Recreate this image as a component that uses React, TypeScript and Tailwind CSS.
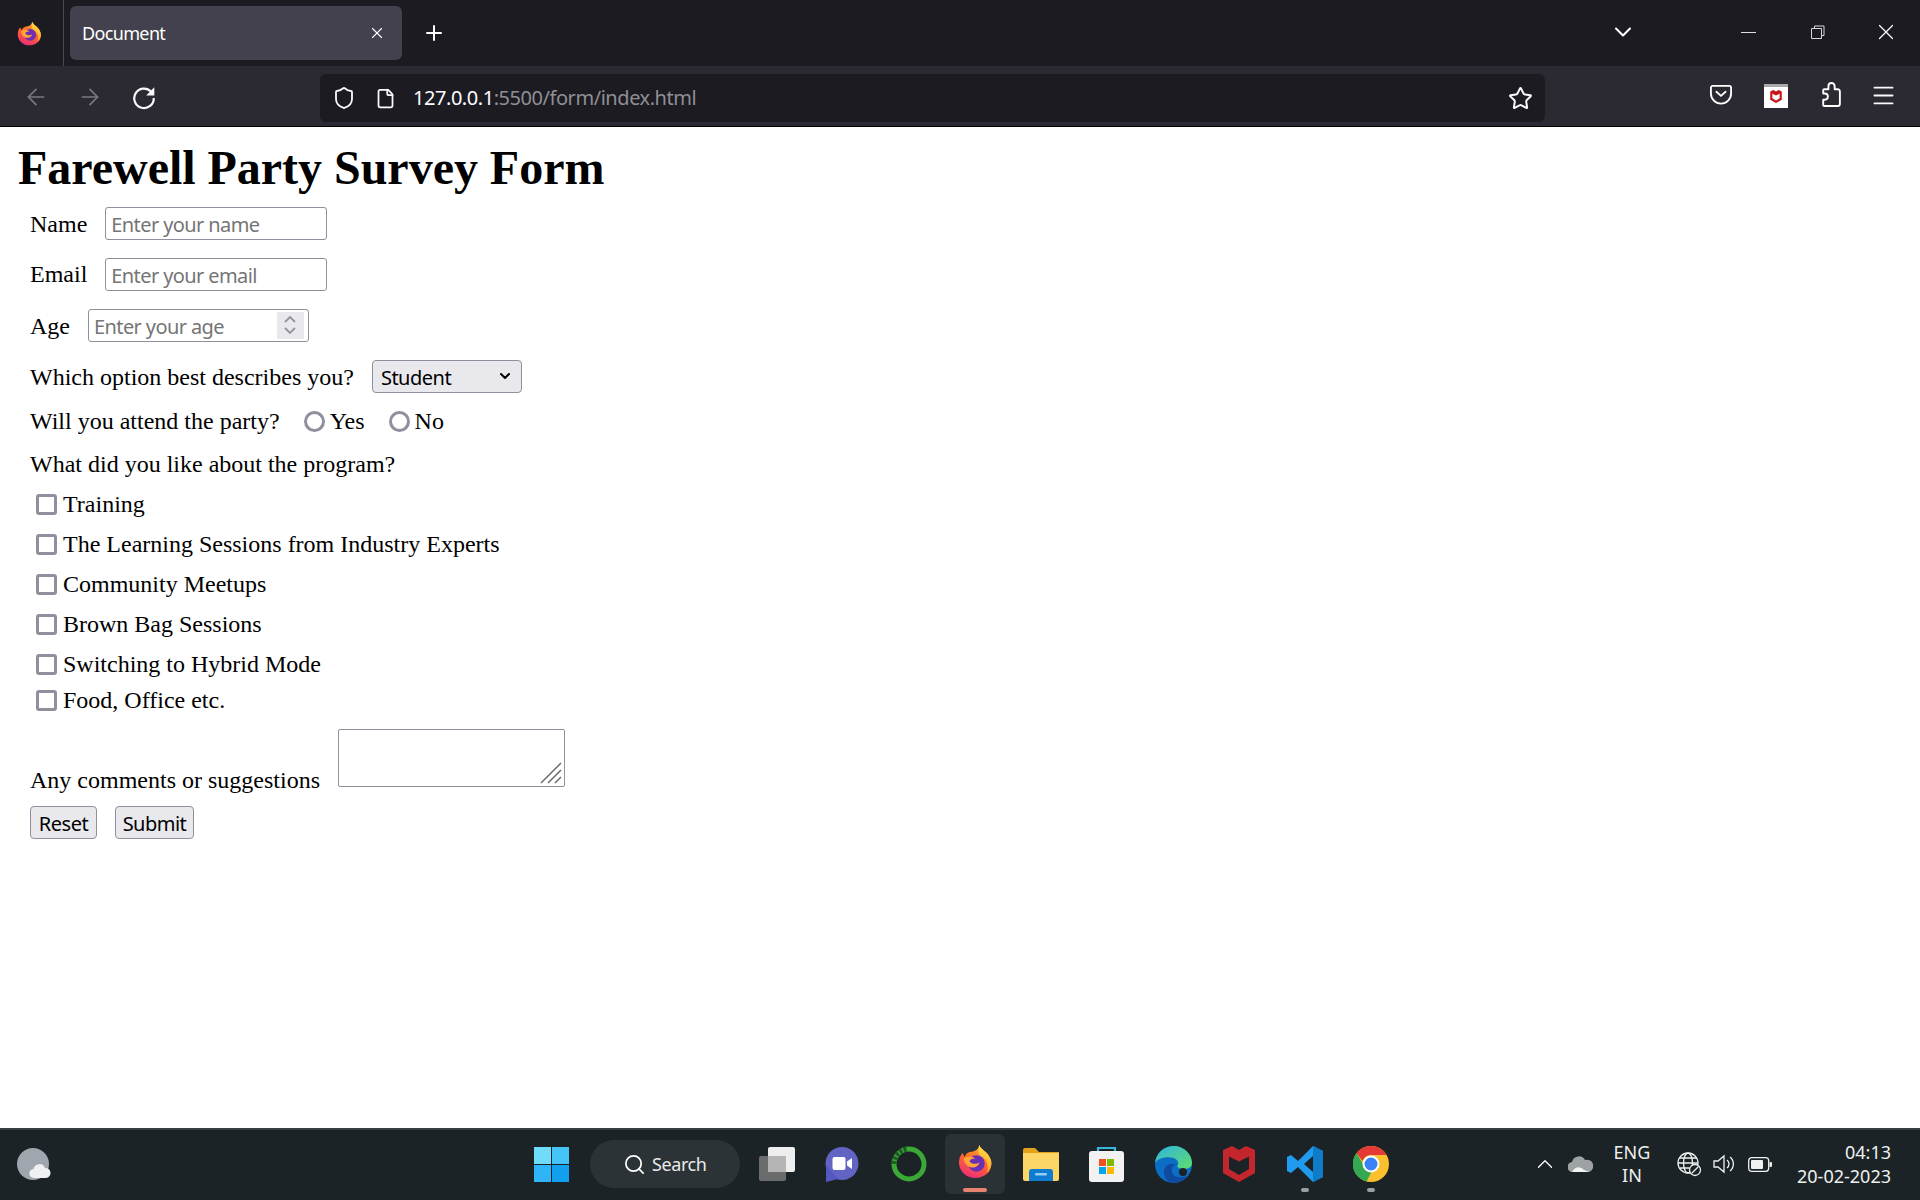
import React from 'react';
import { Search, ChevronUp, ChevronDown, X, Plus, ArrowLeft, ArrowRight, Shield, File, Star, Menu } from 'lucide-react';

const serif = "font-['Liberation_Serif',serif]";
const ui = "font-['Noto_Sans',sans-serif]";

const FirefoxLogo: React.FC<{ size: number; id: string }> = ({ size, id }) => (
  <svg width={size} height={size} viewBox="0 0 36 36">
    <defs>
      <linearGradient id={`${id}a`} x1="0.7" y1="0" x2="0.3" y2="1">
        <stop offset="0" stopColor="#ffb52e" />
        <stop offset="0.45" stopColor="#ff6a2a" />
        <stop offset="1" stopColor="#ee2a7b" />
      </linearGradient>
      <linearGradient id={`${id}b`} x1="0.6" y1="0" x2="0.4" y2="1">
        <stop offset="0" stopColor="#ffe14d" />
        <stop offset="1" stopColor="#ff9a1f" />
      </linearGradient>
    </defs>
    <path d="M22 1c1 4 6 6 9 10 3 4 4 8 3 12-1 7-8 12-16 12C9 35 2 29 1 20 1 15 2 12 5 9c0 2 1 3 2 4 1-3 4-5 7-5 4-1 8-3 8-7z" fill={`url(#${id}a)`} />
    <path d="M22 1c1 4 6 6 9 10 3 4 4 8 3 12-1 3-2 5-4 7 1-5 1-11-3-15-2-2-6-3-6-7 0-3 0-5 1-7z" fill={`url(#${id}b)`} />
    <circle cx="19" cy="20" r="8.5" fill="#6b2fb5" />
    <path d="M6 15c3-3 8-3 12 0-4 0-6 1-6 3 2 3 7 3 10 1-1 4-5 6-9 5-4-1-7-5-7-9z" fill="#ffa436" />
  </svg>
);

const McAfeeShield: React.FC<{ className?: string; color: string; inner: string }> = ({ className, color, inner }) => (
  <svg className={className} viewBox="0 0 32 36">
    <path d="M0 4l9 -4 7 4 7-4 9 4v23l-16 9-16-9z" fill={color} />
    <path d="M6 9l10 5 10-5v14l-10 6-10-6z" fill={inner} />
    <path d="M6 7.5l3-1.500 7 4 7-4 3 1.500v3l-10 5-10-5z" fill={color} />
  </svg>
);

const Titlebar = () => (
  <div className="flex h-[66px] shrink-0 items-start bg-[#1c1b22] text-white">
    <div className="flex h-full w-[64px] items-center justify-center border-r border-[#4b4a53] pr-[4px]">
      <FirefoxLogo size={25} id="fftop" />
    </div>
    <div className={`ml-[6px] mt-[6px] flex h-[54px] w-[332px] items-center justify-between rounded-[6px] bg-[#42414d] pl-[12px] pr-[16px] text-[18px] tracking-[-0.65px] ${ui}`}>
      <span>Document</span>
      <X size={18} strokeWidth={1.5} />
    </div>
    <div className="ml-[20px] mt-[21px]">
      <Plus size={24} strokeWidth={2} />
    </div>
    <div className="ml-auto mt-[18px] flex items-center">
      <ChevronDown size={28} strokeWidth={1.8} />
      <div className="ml-[104px] h-[1px] w-[15px] bg-[#e0e0e0]" />
      <svg width="14" height="14" viewBox="0 0 14 14" className="ml-[55px] fill-none stroke-[#d8d8d8]">
        <path d="M3.500 3.500V1h9.500v9.500h-2.500M.5 3.500h10v10H.5z" />
      </svg>
      <X size={26} strokeWidth={1.1} className="ml-[48px] mr-[21px]" />
    </div>
  </div>
);

const Toolbar = () => (
  <div className="flex h-[61px] shrink-0 items-start border-b border-black bg-[#2b2a33] text-[#fbfbfe]">
    <ArrowLeft size={26} strokeWidth={1.6} className="ml-[23px] mt-[18px] text-[#7a7981]" />
    <ArrowRight size={26} strokeWidth={1.6} className="ml-[28px] mt-[18px] text-[#7a7981]" />
    <svg width="26" height="26" viewBox="0 0 24 24" className="ml-[28px] mt-[18px]">
      <path d="M18.500 7A9 9 0 1 0 21 13" fill="none" stroke="currentColor" strokeWidth="2" />
      <path d="M21.500 3v7.500H14z" fill="currentColor" />
    </svg>
    <div className="ml-[163px] mt-[8px] flex h-[48px] w-[1225px] items-center rounded-[6px] bg-[#1c1b22] pl-[12px] pr-[12px]">
      <Shield size={24} strokeWidth={1.8} />
      <File size={21} strokeWidth={2} className="ml-[19px]" />
      <span className={`ml-[17px] text-[20px] tracking-[-0.45px] ${ui}`}>
        127.0.0.1<span className="text-[#8f8f94]">:5500/form/index.html</span>
      </span>
      <Star size={25} strokeWidth={1.9} className="ml-auto" />
    </div>
    <div className="ml-[163px] mt-[18px] flex w-[26px] items-center justify-center">
      <svg width="22" height="21" viewBox="0 0 24 22" className="fill-none stroke-white stroke-2">
        <path d="M3 1.500h18a2 2 0 0 1 2 2V10a11 11 0 0 1-22 0V3.500a2 2 0 0 1 2-2z" />
        <path d="M7 8l5 4.500L17 8" strokeLinecap="round" />
      </svg>
    </div>
    <div className="ml-[30px] mt-[18px] flex h-[24px] w-[24px] items-start justify-center border-t-[3px] border-[#a8a8a8] bg-white pt-[3px]">
      <McAfeeShield className="h-[13px] w-[12px]" color="#c8161d" inner="#fff" />
    </div>
    <svg width="21" height="25" viewBox="0 0 20 24" className="ml-[32px] mt-[16px] fill-none stroke-white stroke-[1.8]">
      <path d="M8 7H4a1 1 0 0 0-1 1v3h1.500a3 3 0 0 1 0 6H3v5a1 1 0 0 0 1 1h13a2 2 0 0 0 2-2V9a2 2 0 0 0-2-2h-3V4a3 3 0 0 0-6 0z" strokeLinejoin="round" />
    </svg>
    <Menu size={27} strokeWidth={1.7} className="ml-[29px] mt-[16px]" />
  </div>
);

const fieldBox = `h-[33px] rounded-[3px] border border-[#8f8f9d] bg-white pt-[2px] text-[20px] tracking-[-0.6px] outline-none placeholder:text-[#757575] ${ui}`;
const plainBtn = `h-[33px] rounded-[4px] border border-[#8f8f9d] bg-[#e9e9ed] text-[20px] tracking-[-0.5px] text-black ${ui}`;
const tick = 'appearance-none border-[3px] border-[#8f8f9d] bg-white';
const box = `${tick} h-[21px] w-[21px] rounded-[3px]`;
const radio = `${tick} h-[21px] w-[21px] rounded-full`;

const extras = ['Training', 'The Learning Sessions from Industry Experts', 'Community Meetups', 'Brown Bag Sessions', 'Switching to Hybrid Mode'];

const SurveyForm = () => (
  <div className={`flex-1 bg-white pl-[30px] pt-[14px] text-[24px] leading-[33px] text-black ${serif}`}>
    <h1 className="-ml-[12px] text-[48px] font-bold leading-[53px] tracking-[-0.02px]">Farewell Party Survey Form</h1>

    <div className="mt-[13px] flex h-[33px] items-center">
      <label className="pt-[2px]">Name</label>
      <input placeholder="Enter your name" className={`${fieldBox} ml-[18px] w-[222px] px-[5px]`} />
    </div>
    <div className="mt-[18px] flex h-[33px] items-center">
      <label>Email</label>
      <input placeholder="Enter your email" className={`${fieldBox} ml-[18px] w-[222px] px-[5px]`} />
    </div>
    <div className="mt-[18px] flex h-[33px] items-center">
      <label className="pt-[2px]">Age</label>
      <div className="relative ml-[18px] w-[221px]">
        <input placeholder="Enter your age" className={`${fieldBox} w-full px-[5px]`} />
        <div className="pointer-events-none absolute right-[5px] top-[3px] flex h-[27px] w-[27px] items-center justify-center bg-[#e9e9ed]">
          <svg width="16" height="22" viewBox="0 0 16 22" className="fill-none stroke-[#93939c] stroke-[1.8]">
            <path d="M3 8l5-5 5 5M3 14l5 5 5-5" />
          </svg>
        </div>
      </div>
    </div>
    <div className="mt-[18px] flex h-[33px] items-center">
      <label className="pt-[2px]">Which option best describes you?</label>
      <div className="relative ml-[18px] w-[150px]">
        <select className={`${plainBtn} w-full appearance-none pl-[8px]`}>
          <option>Student</option>
        </select>
        <ChevronDown size={16} strokeWidth={3} className="pointer-events-none absolute right-[9px] top-[8px]" />
      </div>
    </div>
    <div className="mt-[12px] flex h-[33px] items-center">
      <label>Will you attend the party?</label>
      <input type="radio" name="attend" className={`${radio} ml-[24px]`} />
      <span className="ml-[5px]">Yes</span>
      <input type="radio" name="attend" className={`${radio} ml-[24px]`} />
      <span className="ml-[5px]">No</span>
    </div>
    <div className="mt-[10px]">What did you like about the program?</div>

    <div className="mt-[7px] flex flex-col gap-[8px] pl-[6px]">
      {extras.map((item) => (
        <label key={item} className="flex h-[32px] items-center gap-[6px]">
          <input type="checkbox" className={box} />
          {item}
        </label>
      ))}
    </div>
    <label className="mt-[4px] flex h-[32px] items-center gap-[6px] pl-[6px]">
      <input type="checkbox" className={box} />
      Food, Office etc.
    </label>

    <div className="mt-[13px] flex h-[58px] items-end">
      <span className="leading-[24px] -mb-[5px]">Any comments or suggestions</span>
      <div className="relative ml-[18px]">
        <textarea className="block h-[58px] w-[227px] resize-none rounded-[2px] border border-[#8f8f9d] bg-white outline-none" />
        <svg width="22" height="22" viewBox="0 0 22 22" className="pointer-events-none absolute bottom-[3px] right-[3px] fill-none stroke-[#6b6b6b]">
          <path d="M1 21L21 1M8 21L21 8M15 21l6-6" strokeWidth="1.500" />
        </svg>
      </div>
    </div>
    <div className="mt-[19px] flex gap-[18px]">
      <button className={`${plainBtn} w-[67px]`}>Reset</button>
      <button className={`${plainBtn} w-[79px]`}>Submit</button>
    </div>
  </div>
);

const Taskbar = () => (
  <div className={`flex h-[72px] shrink-0 items-center border-t-2 border-[#3a3d3f] bg-[#1b2327] pb-[2px] text-white ${ui}`}>
    {/* weather */}
    <div className="relative ml-[17px] h-[32px] w-[32px] rounded-full bg-[#a0a6ad]">
      <svg width="22" height="14" viewBox="0 0 22 14" className="absolute -right-[2px] bottom-[2px] fill-[#eef0f2]">
        <path d="M5 14a4.500 4.500 0 0 1-.5-9A6 6 0 0 1 16 4a5 5 0 0 1 1 10z" />
      </svg>
    </div>

    {/* windows logo */}
    <div className="ml-[485px] grid h-[35px] w-[35px] grid-cols-2 gap-[1px]">
      <div className="bg-[#6fdcfb]" />
      <div className="bg-[#45c5f7]" />
      <div className="bg-[#2db5f5]" />
      <div className="bg-[#10a0ee]" />
    </div>

    <div className="ml-[21px] flex h-[48px] w-[150px] items-center rounded-full bg-[#2c3336] pl-[33px] text-[18px] tracking-[-0.4px]">
      <Search size={23} strokeWidth={1.8} />
      <span className="ml-[6px] text-[#e9eaea]">Search</span>
    </div>

    {/* task view */}
    <div className="relative ml-[19px] h-[34px] w-[36px]">
      <div className="absolute bottom-0 left-0 h-[25px] w-[27px] rounded-[2px] bg-[#6a6c6d]" />
      <div className="absolute right-0 top-0 h-[25px] w-[27px] rounded-[2px] bg-[#eeeeee]" />
      <div className="absolute bottom-[9px] left-[9px] h-[16px] w-[18px] bg-[#b5b5b5]" />
    </div>

    {/* meet */}
    <svg width="34" height="35" viewBox="0 0 34 35" className="ml-[30px]">
      <circle cx="17" cy="16.500" r="16.500" fill="#6264c4" />
      <path d="M1 18l0 17 12-3z" fill="#5558c0" />
      <rect x="7.500" y="10" width="13" height="13" rx="2" fill="#fff" />
      <path d="M22 14.500l5-3.500v11l-5-3.500z" fill="#fff" />
    </svg>

    {/* green ring */}
    <svg width="36" height="36" viewBox="0 0 36 36" className="ml-[32px] fill-none">
      <circle cx="18" cy="18" r="15" stroke="#3aa935" strokeWidth="5" />
      <path d="M3 18A15 15 0 0 1 16 3" stroke="#1f5c25" strokeWidth="5" strokeDasharray="3 1.500" />
    </svg>

    {/* active firefox tile */}
    <div className="relative ml-[18px] flex h-[60px] w-[60px] items-center justify-center rounded-[6px] bg-[#2b3236] pb-[6px]">
      <FirefoxLogo size={35} id="ffbar" />
      <div className="absolute bottom-[2px] left-[18px] h-[4px] w-[24px] rounded-full bg-[#e8836f]" />
    </div>

    {/* folder */}
    <svg width="36" height="33" viewBox="0 0 36 33" className="ml-[18px]">
      <path d="M0 2a2 2 0 0 1 2-2h10l4 4h20v6H0z" fill="#e4a11b" />
      <path d="M0 5h36v26a2 2 0 0 1-2 2H2a2 2 0 0 1-2-2z" fill="#fcd667" />
      <path d="M6 33V24a3 3 0 0 1 3-3h18a3 3 0 0 1 3 3v9z" fill="#0f7cd0" />
      <rect x="12" y="25" width="12" height="2.500" rx="1" fill="#8fd0f7" />
    </svg>

    {/* store */}
    <svg width="35" height="36" viewBox="0 0 35 36" className="ml-[30px]">
      <path d="M9 6V2h17v4" fill="none" stroke="#37b6d9" strokeWidth="2.200" />
      <rect y="5" width="35" height="31" rx="3" fill="#f2f2f2" />
      <rect x="10" y="13" width="7" height="7" fill="#f25022" />
      <rect x="18" y="13" width="7" height="7" fill="#7fba00" />
      <rect x="10" y="21" width="7" height="7" fill="#00a4ef" />
      <rect x="18" y="21" width="7" height="7" fill="#ffb900" />
    </svg>

    {/* edge */}
    <svg width="37" height="37" viewBox="0 0 37 37" className="ml-[31px]">
      <defs>
        <linearGradient id="edgeA" x1="0" y1="0" x2="1" y2="1">
          <stop offset="0" stopColor="#2fb5e0" />
          <stop offset="1" stopColor="#5fdc6c" />
        </linearGradient>
      </defs>
      <circle cx="18.500" cy="18.500" r="18.500" fill="#0c6dc4" />
      <path d="M0 17C1 7 9 0 19 0c10 0 18 8 18 17 0 5-5 6-9 6-3 0-5-1-6-3 2-1 2-6-3-8C12 10 3 12 0 17z" fill="url(#edgeA)" />
      <path d="M19 37c-6 0-10-5-10-11 0-6 5-10 12-7-3 0-5 3-4 7 1 5 8 7 15 4-3 4-8 7-13 7z" fill="#0f4aa0" />
      <circle cx="28" cy="26" r="4" fill="#1b2327" />
    </svg>

    <McAfeeShield className="ml-[31px] h-[36px] w-[32px]" color="#c4262e" inner="#1b2327" />

    {/* vs code */}
    <div className="relative ml-[32px]">
      <svg width="36" height="36" viewBox="0 0 36 36" className="block">
        <path d="M26 0l10 5v26l-10 5L11 21l-7 6-4-2v-14l4-2 7 6zM26 10l-9 8 9 8z" fill="#1f9cf0" fillRule="evenodd" />
        <path d="M26 0l10 5v26l-10 5z" fill="#0f7cc8" />
      </svg>
      <div className="absolute -bottom-[10px] left-[14px] h-[4px] w-[8px] rounded-full bg-[#9a9fa3]" />
    </div>

    {/* chrome */}
    <div className="relative ml-[30px]">
      <svg width="36" height="36" viewBox="0 0 36 36" className="block">
        <circle cx="18" cy="18" r="18" fill="#fbc02d" />
        <path d="M18 0a18 18 0 0 1 15.600 9H18a9 9 0 0 0-8.500 6L3.500 7A18 18 0 0 1 18 0z" fill="#e53935" />
        <path d="M3.500 7l8 13.500a8 8 0 0 0 7 5.500l-5 9.500A18 18 0 0 1 3.500 7z" fill="#34a853" />
        <circle cx="18" cy="18" r="8.500" fill="#fff" />
        <circle cx="18" cy="18" r="6.500" fill="#3b82f6" />
      </svg>
      <div className="absolute -bottom-[10px] left-[14px] h-[4px] w-[8px] rounded-full bg-[#9a9fa3]" />
    </div>

    {/* tray */}
    <ChevronUp size={26} strokeWidth={1.2} className="ml-[143px]" />
    <svg width="25" height="16" viewBox="0 0 25 16" className="ml-[10px]">
      <path d="M5 16a5 5 0 0 1-1-10 7 7 0 0 1 13-2 6 6 0 0 1 4 12z" fill="#9ea2a4" />
      <path d="M4 16c3-6 8-6 12-2l5 2z" fill="#f2f2f2" />
    </svg>
    <div className="ml-[14px] flex w-[50px] flex-col items-center text-[18px] leading-[23px] text-[#f0f0f0]">
      <span>ENG</span>
      <span>IN</span>
    </div>
    <svg width="25" height="25" viewBox="0 0 25 25" className="ml-[20px] fill-none stroke-[#f0f0f0] stroke-[1.300]">
      <circle cx="11" cy="11" r="10" />
      <ellipse cx="11" cy="11" rx="4.500" ry="10" />
      <path d="M1 11h20M2.500 6h17M2.500 16h10" />
      <circle cx="18" cy="18" r="5.500" fill="#1b2327" />
      <path d="M14.500 21.500l7-7" />
    </svg>
    <svg width="24" height="20" viewBox="0 0 24 20" className="ml-[11px] fill-none stroke-[#f0f0f0] stroke-[1.300]">
      <path d="M1 7h4l6-5v16l-6-5H1zM14 6a5 5 0 0 1 0 8M17 3a9 9 0 0 1 0 14" />
    </svg>
    <svg width="25" height="15" viewBox="0 0 25 15" className="ml-[11px]">
      <rect x="0.700" y="0.700" width="20" height="13.600" rx="3" fill="none" stroke="#f0f0f0" strokeWidth="1.300" />
      <rect x="3" y="3" width="12" height="9" rx="1" fill="#f0f0f0" />
      <rect x="21.500" y="5" width="2.500" height="5" rx="1" fill="#f0f0f0" />
    </svg>
    <div className="ml-auto mr-[29px] flex flex-col items-end text-[18px] leading-[24px] text-[#f0f0f0]">
      <span>04:13</span>
      <span>20-02-2023</span>
    </div>
  </div>
);

export default function App() {
  return (
    <div className="flex h-[1200px] w-[1920px] flex-col overflow-hidden">
      <Titlebar />
      <Toolbar />
      <SurveyForm />
      <Taskbar />
    </div>
  );
}
